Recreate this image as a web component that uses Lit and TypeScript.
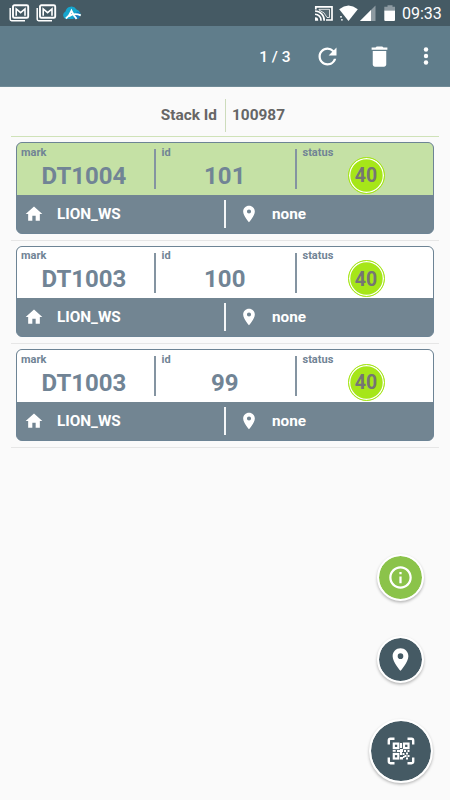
import { LitElement, html, css, svg } from "lit";
import { customElement, property } from "lit/decorators.js";

interface StackItem {
  mark: string;
  id: string;
  status: string;
  workshop: string;
  place: string;
  selected: boolean;
}

const ITEMS: StackItem[] = [
  { mark: "DT1004", id: "101", status: "40", workshop: "LION_WS", place: "none", selected: true },
  { mark: "DT1003", id: "100", status: "40", workshop: "LION_WS", place: "none", selected: false },
  { mark: "DT1003", id: "99", status: "40", workshop: "LION_WS", place: "none", selected: false },
];

const PIN = "M12 2C8.13 2 5 5.13 5 9c0 5.25 7 13 7 13s7-7.75 7-13c0-3.87-3.13-7-7-7zm0 9.5a2.5 2.5 0 0 1 0-5 2.5 2.5 0 0 1 0 5z";
const HOME = "M10 20v-6h4v6h5v-8h3L12 3 2 12h3v8z";
const REFRESH = "M17.65 6.35A7.958 7.958 0 0 0 12 4c-4.42 0-7.99 3.58-7.99 8s3.57 8 7.99 8c3.73 0 6.84-2.55 7.73-6h-2.08A5.99 5.99 0 0 1 12 18c-3.31 0-6-2.69-6-6s2.69-6 6-6c1.66 0 3.14.69 4.22 1.78L13 11h7V4l-2.35 2.35z";
const TRASH = "M6 19c0 1.1.9 2 2 2h8c1.1 0 2-.9 2-2V7H6v12zM19 4h-3.5l-1-1h-5l-1 1H5v2h14V4z";
const INFO = "M11 17h2v-6h-2v6zm1-15C6.48 2 2 6.48 2 12s4.48 10 10 10 10-4.48 10-10S17.52 2 12 2zm0 18c-4.41 0-8-3.59-8-8s3.59-8 8-8 8 3.59 8 8-3.59 8-8 8zM11 9h2V7h-2v2z";

const icon = (path: string, size: number) => html`
  <svg width=${size} height=${size} viewBox="0 0 24 24" fill="currentColor"><path d=${path}></path></svg>
`;

const mailIcon = svg`
  <path d="M1.200 4V15.300Q1.200 16.700 2.600 16.700H16" fill="none" stroke="#fff" stroke-width="1.500"/>
  <rect x="4" y="1.200" width="15.200" height="12.600" rx="1.400" fill="none" stroke="#fff" stroke-width="1.900"/>
  <path d="M7.200 11.800V5L11.600 8.600L16 5V11.800" fill="none" stroke="#fff" stroke-width="1.600"/>
`;

@customElement("stack-card")
export class StackCard extends LitElement {
  @property({ attribute: false }) item!: StackItem;

  static styles = css`
    :host { display: block; height: 103.500px; box-sizing: border-box; padding: 5.400px 5px 0; border-bottom: 1px solid #e6e6e6; }
    .card { box-sizing: border-box; height: 91.500px; border: 1px solid #6d8495; border-radius: 6px; background: #728592; overflow: hidden; }
    .top { height: 51.500px; display: grid; grid-template-columns: 138px 141px 1fr; background: #fff; color: #718495; }
    .selected .top { background: #c5e1a5; }
    .cell { position: relative; display: flex; flex-direction: column; align-items: center; }
    .rule::before { content: ""; position: absolute; left: -1px; top: 6px; width: 1.500px; height: 40px; background: #8494a1; }
    .label { align-self: flex-start; margin: 2.600px 0 0 4px; font-size: 11px; line-height: 13px; font-weight: 700; }
    .rule .label { margin-left: 6.500px; }
    .value { font-size: 24px; line-height: 28px; font-weight: 700; margin-top: 3px; margin-left: -1.500px; }
    .first .value { margin-left: -4px; }
    .badge { margin-top: -2px; margin-left: 4px; width: 37px; height: 37px; box-sizing: border-box; border-radius: 50%; background: #a6e619; border: 1px solid #a6e619; box-shadow: inset 0 0 0 1.300px #fff; display: flex; align-items: center; justify-content: center; color: #757575; font-size: 19.500px; line-height: 24px; font-weight: 700; padding-top: 2px; padding-right: 1px; flex: none; }
    .bottom { height: 38px; display: grid; grid-template-columns: 207px 2px 1fr; align-items: center; color: #fff; font-size: 15.300px; line-height: 20px; font-weight: 700; }
    .bar { width: 2px; height: 28px; background: #f4f6f7; }
    .entry { display: flex; align-items: center; padding-left: 7px; gap: 13px; }
    .place { padding-left: 13px; }
    svg { display: block; flex: none; }
  `;

  render() {
    const i = this.item;
    return html`
      <div class="card ${i.selected ? "selected" : ""}">
        <div class="top">
          <div class="cell first"><span class="label">mark</span><span class="value">${i.mark}</span></div>
          <div class="cell rule"><span class="label">id</span><span class="value">${i.id}</span></div>
          <div class="cell rule"><span class="label">status</span><span class="badge">${i.status}</span></div>
        </div>
        <div class="bottom">
          <div class="entry">${icon(HOME, 20)}<span>${i.workshop}</span></div>
          <div class="bar"></div>
          <div class="entry place">${icon(PIN, 20)}<span>${i.place}</span></div>
        </div>
      </div>
    `;
  }
}

@customElement("app-root")
export class AppRoot extends LitElement {
  static styles = css`
    :host { display: block; position: relative; width: 450px; height: 800px; overflow: hidden; background: #fafafa; font-family: Roboto, sans-serif; }
    svg { display: block; flex: none; }
    .status { height: 26px; box-sizing: border-box; background: #455a64; display: flex; align-items: center; padding: 0 9px; color: #fff; }
    .notices { display: flex; gap: 5.700px; margin-right: auto; }
    .system { display: flex; align-items: center; }
    .clock { font-size: 16px; line-height: 20px; margin-top: 2px; width: 39px; white-space: nowrap; }
    .toolbar { height: 61px; box-sizing: border-box; background: #607d8b; border-bottom: 1px solid #708b97; display: flex; align-items: center; justify-content: flex-end; color: #fff; }
    .count { font-size: 15.500px; line-height: 20px; font-weight: 500; margin-right: 23px; margin-top: 1px; }
    .trash { margin: 0 17px 0 25.500px; }
    .more { margin-right: 8px; }
    .heading { margin: 0 11px; height: 50px; box-sizing: border-box; border-bottom: 1px solid #cfe2b8; display: grid; grid-template-columns: 214px 1px 1fr; align-items: center; color: #666; font-size: 15.400px; line-height: 20px; font-weight: 700; padding-top: 7px; }
    .heading-name { text-align: right; padding-right: 8px; }
    .heading-rule { width: 1px; height: 33px; background: #cddcbc; }
    .heading-value { padding-left: 6px; }
    .list { margin: 0 11px; }
    .actions { position: absolute; right: 17.500px; bottom: 17.500px; display: flex; flex-direction: column; align-items: center; }
    .fab { box-sizing: border-box; width: 47px; height: 47px; border: 2px solid #fff; border-radius: 50%; display: flex; align-items: center; justify-content: center; color: #fff; background: #455a64; background-clip: padding-box; box-shadow: 0 1.500px 3px rgba(0, 0, 0, .28); }
    .info { background-color: #8bc34a; margin-bottom: 35px; }
    .pin { margin-bottom: 35.300px; }
    .scan { width: 64px; height: 64px; }
  `;

  render() {
    return html`
      <div class="status">
        <div class="notices">
          <svg width="21" height="18" viewBox="0 0 21 18">${mailIcon}</svg>
          <svg width="21" height="18" viewBox="0 0 21 18">${mailIcon}</svg>
          <svg width="20" height="18" viewBox="0 0 20 18">
            <path d="M4 15a4 4 0 0 1-.5-7.500A6 6 0 0 1 14.500 5.500a5 5 0 0 1 3.500 7q-1 2.500-4 2.500z" fill="#16a5cd"></path>
            <path d="M11 15L15 7.500L18 8.500v4q-1 2.500-4 2.500z" fill="#147ac0"></path>
            <path d="M3.800 14.500Q7.500 12 9.500 6.800Q12 12 14.600 14.800M7 12.300Q12 8.500 18.800 11.300" fill="none" stroke="#fff" stroke-width="1.900"></path>
          </svg>
        </div>
        <div class="system">
          <svg width="88" height="26" viewBox="0 0 88 26">
            <g fill="none" stroke="#fff">
              <path d="M1.800 9.500V6.800H18V20H12" stroke-width="1.700"></path>
              <path d="M1 11a9.200 9.200 0 0 1 9.200 9.700M1 14.200a6 6 0 0 1 6 6.500" stroke-width="1.600"></path>
              <path d="M5 9.300H15.500V17.500H13Q11 12 5 10z" fill="#fff" fill-opacity=".1" stroke-width=".8"></path>
            </g>
            <path d="M1 17.300a3.200 3.200 0 0 1 3.200 3.400H1z" fill="#fff"></path>
            <path d="M34.500 21L25.200 9.200Q34.500 2 43.800 9.200z" fill="#fff"></path>
            <path d="M26 16.200h2v1.200h-2zM27 19.200h1.800v1.400H27z" fill="#fff"></path>
            <path d="M46 21L61.500 5.500V21z" fill="#8d9aa1"></path>
            <path d="M46 21L57 10V21z" fill="#fff"></path>
            <path d="M73.500 5.300h5v1.500h2.500V10.500H70.300V6.800h3.200z" fill="#8d9aa1"></path>
            <path d="M70.300 10.500H81V20q0 1-1 1h-8.700q-1 0-1-1z" fill="#fff"></path>
          </svg>
          <span class="clock">09:33</span>
        </div>
      </div>
      <div class="toolbar">
        <span class="count">1 / 3</span>
        ${icon(REFRESH, 27)}
        <div class="trash">${icon(TRASH, 27)}</div>
        <svg class="more" width="32" height="28" viewBox="0 0 32 28" fill="#fff">
          <circle cx="16" cy="7.500" r="2.200"></circle><circle cx="16" cy="14" r="2.200"></circle><circle cx="16" cy="20.500" r="2.200"></circle>
        </svg>
      </div>
      <div class="heading">
        <span class="heading-name">Stack Id</span><span class="heading-rule"></span><span class="heading-value">100987</span>
      </div>
      <div class="list">${ITEMS.map((item) => html`<stack-card .item=${item}></stack-card>`)}</div>
      <div class="actions">
        <div class="fab info">${icon(INFO, 27)}</div>
        <div class="fab pin">${icon(PIN, 27)}</div>
        <div class="fab scan">
          <svg width="28" height="28" viewBox="0 0 28 28">
            <path d="M1.800 7.500V3.500Q1.800 1.800 3.500 1.800H7.500M20.500 1.800H24.500Q26.200 1.800 26.200 3.500V7.500M26.200 20.500V24.500Q26.200 26.200 24.500 26.200H20.500M7.500 26.200H3.500Q1.800 26.200 1.800 24.500V20.500" fill="none" stroke="#fff" stroke-width="2.400"></path>
            <g fill="none" stroke="#fff" stroke-width="2.200">
              <rect x="6.800" y="6.600" width="4.500" height="4.500"></rect>
              <rect x="17" y="6.600" width="4.500" height="4.500"></rect>
              <rect x="6.800" y="17" width="4.500" height="4.500"></rect>
            </g>
            <path d="M13 6h2v5h-2zM5.700 13h3v1.800h-3zM10 13h3v-1h3v3h-1v3h-2v-3h-3zM17 13h2v2h-2zM20.500 13h2v2h-2zM15.500 16h2v2h-2zM19 15.500h2v2h-2zM17.500 18h2v2h-2zM20.500 18h2v2h-2zM13 20h3v2.500h-3zM16 19h1.500v2H16zM19 20.500h2v2h-2z" fill="#fff"></path>
          </svg>
        </div>
      </div>
    `;
  }
}
